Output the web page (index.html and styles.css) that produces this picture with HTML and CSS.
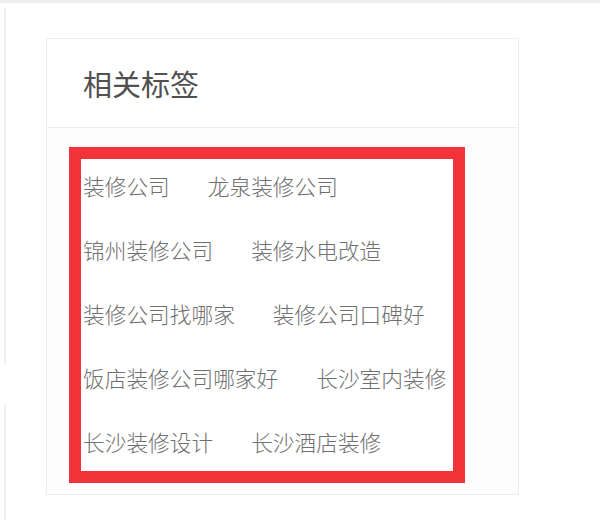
FILE: index.html
```html
<!DOCTYPE html>
<html lang="zh-CN">
<head>
    <meta charset="UTF-8">
    <meta name="viewport" content="width=device-width, initial-scale=1.0">
    <title>相关标签</title>
    <link rel="stylesheet" href="styles.css">
</head>
<body>
    <div class="topbar"></div>

    <div class="page">
        <!-- 左侧相邻面板的边线 -->
        <div class="rail">
            <div class="rail-panel first"></div>
            <div class="rail-panel second"></div>
        </div>

        <div class="card">
            <div class="card-header">
                <h2>相关标签</h2>
            </div>
            <div class="card-body">
                <div class="tag-list">
                    <a href="#" class="tag">装修公司</a>
                    <a href="#" class="tag">龙泉装修公司</a>
                    <a href="#" class="tag">锦州装修公司</a>
                    <a href="#" class="tag">装修水电改造</a>
                    <a href="#" class="tag">装修公司找哪家</a>
                    <a href="#" class="tag">装修公司口碑好</a>
                    <a href="#" class="tag">饭店装修公司哪家好</a>
                    <a href="#" class="tag">长沙室内装修</a>
                    <a href="#" class="tag">长沙装修设计</a>
                    <a href="#" class="tag">长沙酒店装修</a>
                </div>
            </div>
        </div>
    </div>
</body>
</html>
```

FILE: styles.css
```css
* {
    margin: 0;
    padding: 0;
    box-sizing: border-box;
}

body {
    font-family: "Noto Sans CJK SC", "Liberation Sans", sans-serif;
    background-color: #fff;
    color: #666;
    width: 600px;
    height: 520px;
    overflow: hidden;
}

.topbar {
    height: 3px;
    background-color: #eeeeee;
}

.page {
    display: flex;
    align-items: flex-start;
}

.rail {
    margin-left: 4px;
    margin-top: 4px;
    width: 2px;
    display: flex;
    flex-direction: column;
}

.rail-panel {
    border-left: 2px solid #f0f0f0;
}

.rail-panel.first {
    height: 358px;
}

.rail-panel.second {
    margin-top: 40px;
    height: 120px;
}

.card {
    margin-left: 40px;
    margin-top: 35px;
    width: 473px;
    height: 457px;
    border: 1px solid #ededed;
    background-color: #fdfdfd;
}

.card-header {
    height: 89px;
    display: flex;
    align-items: center;
    padding-left: 36px;
    background-color: #fff;
    border-bottom: 1px solid #ededed;
}

.card-header h2 {
    font-size: 29px;
    font-weight: 400;
    color: #505050;
    line-height: 1;
}

.card-body {
    padding-left: 22px;
    padding-top: 19px;
}

.tag-list {
    width: 396px;
    border: 12px solid #f2333a;
    background-color: #fff;
    padding: 14px 0 16px 2px;
    display: flex;
    flex-wrap: wrap;
    column-gap: 38px;
    row-gap: 38px;
}

.tag {
    font-size: 21.7px;
    font-weight: 300;
    line-height: 26px;
    color: #707070;
    text-decoration: none;
    white-space: nowrap;
}

.tag:hover {
    color: #f2333a;
}
```
